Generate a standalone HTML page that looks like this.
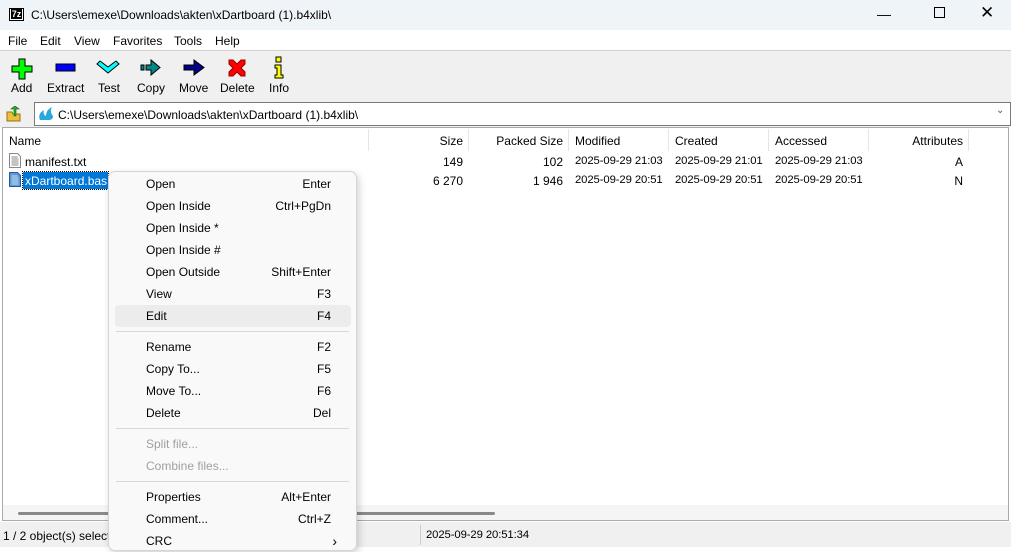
<!DOCTYPE html><html><head><style>
*{margin:0;padding:0;box-sizing:border-box}
body{width:1011px;height:547px;overflow:hidden;background:#fff;font-family:"Liberation Sans",sans-serif;font-size:12px;color:#000;position:relative}
.a{position:absolute;white-space:nowrap}
.r{text-align:right}
.d{font-size:11.3px;letter-spacing:-.1px}
.mi{position:absolute;left:146px;width:185px;height:22px;line-height:22px;top:1px}
.mi span{position:absolute;right:0}
.dis{color:#a0a0a0}
.sep{position:absolute;left:116px;width:233px;height:1px;background:#d8d8d8}
.tb{position:absolute;top:81px;font-size:12px;text-align:center}
</style></head><body>
<div class="a" style="left:0;top:0;width:1011px;height:30px;background:#eff4f9"></div>
<div class="a" style="left:9px;top:8px;width:15px;height:13px;border:1px solid #000;background:#fff;font-size:9px;font-weight:bold;line-height:11px;text-align:center;color:#000"><span style="background:#000;color:#fff;padding:0 1px">7z</span></div>
<div class="a" style="left:31px;top:8px;font-size:12px">C:\Users\emexe\Downloads\akten\xDartboard (1).b4xlib\</div>
<div class="a" style="left:877px;top:6px;font-size:14px">&#8212;</div>
<div class="a" style="left:934px;top:7px;width:11px;height:11px;border:1px solid #000"></div>
<div class="a" style="left:980px;top:3px;font-size:17px">&#10005;</div>
<div class="a" style="left:0;top:30px;width:1011px;height:20px;background:#fff"></div>
<div class="a" style="left:8px;top:34px">File</div><div class="a" style="left:40px;top:34px">Edit</div><div class="a" style="left:74px;top:34px">View</div><div class="a" style="left:113px;top:34px">Favorites</div><div class="a" style="left:174px;top:34px">Tools</div><div class="a" style="left:215px;top:34px">Help</div>
<div class="a" style="left:0;top:50px;width:1011px;height:51px;background:#f0f0f0;border-top:1px solid #d0d0d0"></div>
<svg class="a" style="left:0;top:55px" width="300" height="26">
<path d="M19 4h6v7h7v6h-7v7h-6v-7h-7v-6h7z" fill="#0f0" stroke="#000"/>
<rect x="56" y="9" width="19" height="7" fill="#00f" stroke="#000"/>
<path d="M97 9l11 9 11-9-3-3-8 6-8-6z" fill="#0ff" stroke="#000"/>
<path d="M141 10h3v5h-3zM146 10h5v-5l9 7.5-9 7.5v-5h-5z" fill="#088" stroke="#000"/>
<path d="M184 10h10v-5l10 7.5-10 7.5v-5h-10z" fill="#008" stroke="#000"/>
<path d="M229 5l4 0 4 4 4-4 4 0 0 4-4 4 4 4 0 4-4 0-4-4-4 4-4 0 0-4 4-4-4-4z" fill="#f00" stroke="#900"/>
<path d="M276 2h5v5h-5zM275 10h6v10h2v3h-8v-3h2v-7h-2z" fill="#ff0" stroke="#000"/>
</svg>
<div class="tb" style="left:11px">Add</div><div class="tb" style="left:47px">Extract</div><div class="tb" style="left:98px">Test</div><div class="tb" style="left:137px">Copy</div><div class="tb" style="left:179px">Move</div><div class="tb" style="left:220px">Delete</div><div class="tb" style="left:269px">Info</div>
<div class="a" style="left:0;top:101px;width:1011px;height:26px;background:#f0f0f0"></div>
<svg class="a" style="left:6px;top:106px" width="16" height="16"><path d="M1 6h5l1 2h7v7H1z" fill="#e8c040" stroke="#a07000"/><path d="M8 10V3h-3l4-3 4 3h-3v7z" fill="#3a3" stroke="#060" stroke-width=".6"/></svg>
<div class="a" style="left:34px;top:102px;width:977px;height:24px;background:#fff;border:1px solid #7a7a7a"></div>
<svg class="a" style="left:38px;top:106px" width="16" height="15"><path d="M2 14c-2-4 0-8 4-10-1 3 0 5 2 6 0-4 2-7 6-9-2 3-1 7 1 9 0 3-2 4-4 4z" fill="#29a8e0"/></svg>
<div class="a" style="left:58px;top:108px">C:\Users\emexe\Downloads\akten\xDartboard (1).b4xlib\</div>
<div class="a" style="left:996px;top:105px;font-size:10px;color:#555">&#8964;</div>
<div class="a" style="left:2px;top:127px;width:1007px;height:394px;border:1px solid #aaa;background:#fff"></div>
<div class="a" style="left:368px;top:129px;width:1px;height:22px;background:#e5e5e5"></div>
<div class="a" style="left:468px;top:129px;width:1px;height:22px;background:#e5e5e5"></div>
<div class="a" style="left:568px;top:129px;width:1px;height:22px;background:#e5e5e5"></div>
<div class="a" style="left:668px;top:129px;width:1px;height:22px;background:#e5e5e5"></div>
<div class="a" style="left:768px;top:129px;width:1px;height:22px;background:#e5e5e5"></div>
<div class="a" style="left:868px;top:129px;width:1px;height:22px;background:#e5e5e5"></div>
<div class="a" style="left:968px;top:129px;width:1px;height:22px;background:#e5e5e5"></div>
<div class="a" style="left:9px;top:134px">Name</div>
<div class="a r" style="left:400px;top:134px;width:63px">Size</div>
<div class="a r" style="left:470px;top:134px;width:93px">Packed Size</div>
<div class="a" style="left:575px;top:134px">Modified</div>
<div class="a" style="left:675px;top:134px">Created</div>
<div class="a" style="left:775px;top:134px">Accessed</div>
<div class="a r" style="left:870px;top:134px;width:93px">Attributes</div>
<svg class="a" style="left:9px;top:153px" width="12" height="15"><path d="M.5.5h8l3 3v11H.5z" fill="#fff" stroke="#888"/><path d="M2.5 4h6M2.5 6h7M2.5 8h7M2.5 10h7M2.5 12h7" stroke="#888"/></svg>
<div class="a" style="left:25px;top:155px">manifest.txt</div>
<div class="a r" style="left:400px;top:155px;width:63px">149</div><div class="a r" style="left:470px;top:155px;width:93px">102</div>
<div class="a d" style="left:575px;top:155px">2025-09-29 21:03</div><div class="a d" style="left:675px;top:155px">2025-09-29 21:01</div><div class="a d" style="left:775px;top:155px">2025-09-29 21:03</div>
<div class="a r" style="left:870px;top:155px;width:93px">A</div>
<svg class="a" style="left:9px;top:172px" width="12" height="15"><path d="M.5.5h8l3 3v11H.5z" fill="#5a9ad8" stroke="#2a5a98"/><path d="M2.5 4h6M2.5 6h7M2.5 8h7M2.5 10h7M2.5 12h7" stroke="#cde"/></svg>
<div class="a" style="left:23px;top:172px;width:85px;height:17px;background:#0078d7;outline:1px dotted #000"></div>
<div class="a" style="left:25px;top:174px;color:#fff">xDartboard.bas</div>
<div class="a r" style="left:400px;top:174px;width:63px">6 270</div><div class="a r" style="left:470px;top:174px;width:93px">1 946</div>
<div class="a d" style="left:575px;top:174px">2025-09-29 20:51</div><div class="a d" style="left:675px;top:174px">2025-09-29 20:51</div><div class="a d" style="left:775px;top:174px">2025-09-29 20:51</div>
<div class="a r" style="left:870px;top:174px;width:93px">N</div>
<div class="a" style="left:3px;top:505px;width:1005px;height:15px;background:#f5f5f5"></div>
<div class="a" style="left:18px;top:512px;width:477px;height:3px;background:#8a8a8a;border-radius:2px"></div>
<div class="a" style="left:0;top:522px;width:1011px;height:25px;background:#f0f0f0"></div>
<div class="a" style="left:420px;top:525px;width:1px;height:20px;background:#ccc"></div>
<div class="a" style="left:3px;top:529px">1 / 2 object(s) selected</div>
<div class="a d" style="left:426px;top:529px">2025-09-29 20:51:34</div>
<div class="a" style="left:108px;top:171px;width:249px;height:380px;background:#f9f9f9;border:1px solid #d5d5d5;border-radius:7px;box-shadow:2px 3px 8px rgba(0,0,0,.18)"></div>
<div class="a" style="left:115px;top:305px;width:236px;height:22px;background:#ececec;border-radius:4px"></div>
<div class="mi" style="top:173px">Open<span>Enter</span></div>
<div class="mi" style="top:195px">Open Inside<span>Ctrl+PgDn</span></div>
<div class="mi" style="top:217px">Open Inside *</div>
<div class="mi" style="top:239px">Open Inside #</div>
<div class="mi" style="top:261px">Open Outside<span>Shift+Enter</span></div>
<div class="mi" style="top:283px">View<span>F3</span></div>
<div class="mi" style="top:305px">Edit<span>F4</span></div>
<div class="sep" style="top:331px"></div>
<div class="mi" style="top:336px">Rename<span>F2</span></div>
<div class="mi" style="top:358px">Copy To...<span>F5</span></div>
<div class="mi" style="top:380px">Move To...<span>F6</span></div>
<div class="mi" style="top:402px">Delete<span>Del</span></div>
<div class="sep" style="top:428px"></div>
<div class="mi dis" style="top:433px">Split file...</div>
<div class="mi dis" style="top:455px">Combine files...</div>
<div class="sep" style="top:481px"></div>
<div class="mi" style="top:486px">Properties<span>Alt+Enter</span></div>
<div class="mi" style="top:508px">Comment...<span>Ctrl+Z</span></div>
<div class="mi" style="top:530px">CRC<span style="right:-6px;font-size:14px">&#8250;</span></div>
</body></html>
